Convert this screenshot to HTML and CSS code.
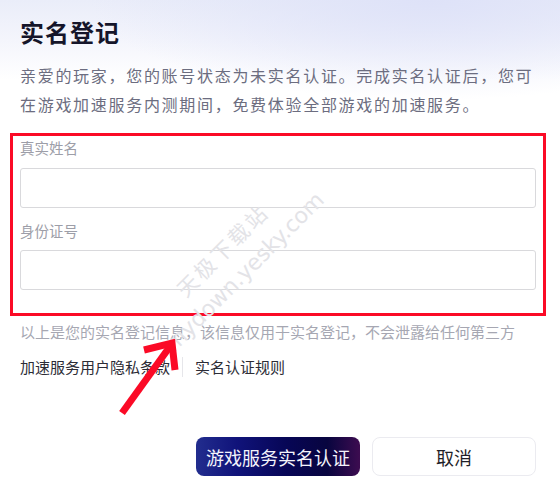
FILE: index.html
```html
<!DOCTYPE html>
<html lang="zh-CN">
<head>
    <meta charset="UTF-8">
    <meta name="viewport" content="width=device-width, initial-scale=1.0">
    <title>实名登记</title>
    <link rel="stylesheet" href="styles.css">
</head>
<body>
    <div class="dialog">
        <h1 class="title">实名登记</h1>
        <p class="intro">亲爱的玩家，您的账号状态为未实名认证。完成实名认证后，您可在游戏加速服务内测期间，免费体验全部游戏的加速服务。</p>

        <div class="form-box">
            <label class="field-label" for="realName">真实姓名</label>
            <input class="field-input" id="realName" type="text" />

            <label class="field-label second" for="idNumber">身份证号</label>
            <input class="field-input second-input" id="idNumber" type="text" />
        </div>

        <p class="note">以上是您的实名登记信息，该信息仅用于实名登记，不会泄露给任何第三方</p>

        <div class="links">
            <a class="link" href="#">加速服务用户隐私条款</a>
            <span class="divider"></span>
            <a class="link" href="#">实名认证规则</a>
        </div>

        <div class="actions">
            <button class="btn btn-primary">游戏服务实名认证</button>
            <button class="btn btn-cancel">取消</button>
        </div>

        <div class="watermark">
            <span class="wm-cn">天极下载站</span>
            <span class="wm-en">mydown.yesky.com</span>
        </div>

        <svg class="arrow" width="80" height="90" viewBox="0 0 80 90">
            <path d="M14 80 L63 12" stroke="#fb0a26" stroke-width="7" fill="none" />
            <path d="M36 17 L64 10 L67 37" stroke="#fb0a26" stroke-width="7" fill="none" stroke-linejoin="miter" />
        </svg>
    </div>
</body>
</html>
```

FILE: styles.css
```css
body {
    margin: 0;
    font-family: "Noto Sans CJK SC", "Noto Sans", sans-serif;
    background: #fff;
}

.dialog {
    position: relative;
    width: 560px;
    height: 490px;
    box-sizing: border-box;
    padding: 16px 20px 0 20px;
    overflow: hidden;
    background:
        radial-gradient(ellipse 340px 100px at 430px 0, rgba(222, 226, 248, 1), rgba(255, 255, 255, 0)),
        linear-gradient(180deg, #eaedf9 0, #f4f5fc 40px, #ffffff 80px);
}

.title {
    margin: 0;
    font-size: 24px;
    line-height: 32px;
    font-weight: 700;
    letter-spacing: 1px;
    color: #15152a;
}

.intro {
    width: 520px;
    margin: 13px 0 0 0;
    font-size: 16px;
    line-height: 29px;
    letter-spacing: 1.7px;
    color: #6c6d80;
}

.form-box {
    display: flex;
    flex-direction: column;
    margin: 14px -6px 0 -10px;
    padding: 2px 7px 23px 7px;
    border: 3px solid #fb0a26;
}

.field-label {
    font-size: 14.5px;
    line-height: 20px;
    color: #9d9ea8;
}

.field-label.second {
    margin-top: 13px;
}

.field-input {
    margin-top: 10px;
    height: 40px;
    box-sizing: border-box;
    border: 1px solid #d9d9dc;
    border-radius: 3px;
    background: transparent;
    outline: none;
}

.field-input.second-input {
    margin-top: 9px;
}

.note {
    margin: 6px 0 0 0;
    font-size: 15px;
    line-height: 20px;
    color: #a6a7b2;
}

.links {
    display: flex;
    align-items: center;
    margin-top: 15px;
    height: 20px;
}

.link {
    font-size: 15px;
    line-height: 20px;
    color: #2c2c36;
    text-decoration: none;
}

.divider {
    width: 1px;
    height: 20px;
    margin: 0 12px;
    background: #e6e6ea;
}

.actions {
    display: flex;
    justify-content: flex-end;
    gap: 12px;
    margin: 60px 4px 0 0;
}

.btn {
    width: 164px;
    height: 39px;
    border-radius: 8px;
    font-family: inherit;
    font-size: 18px;
    cursor: pointer;
}

.btn-primary {
    border: none;
    color: #f4f4fb;
    background: linear-gradient(90deg, #222d8e 0%, #10137a 25%, #070656 55%, #08053f 80%, #3d0c50 100%);
}

.btn-cancel {
    border: 1px solid #ebebf0;
    background: #fff;
    color: #1f1f28;
}

.watermark {
    position: absolute;
    left: 126px;
    top: 232px;
    display: flex;
    flex-direction: column;
    align-items: center;
    gap: 6px;
    transform: rotate(-45deg);
    color: #e3e3e7;
    pointer-events: none;
}

.wm-cn {
    font-size: 21px;
    line-height: 26px;
    letter-spacing: 3px;
}

.wm-en {
    font-family: "DejaVu Sans", sans-serif;
    font-size: 22px;
    line-height: 26px;
}

.arrow {
    position: absolute;
    left: 108px;
    top: 333px;
}
```
